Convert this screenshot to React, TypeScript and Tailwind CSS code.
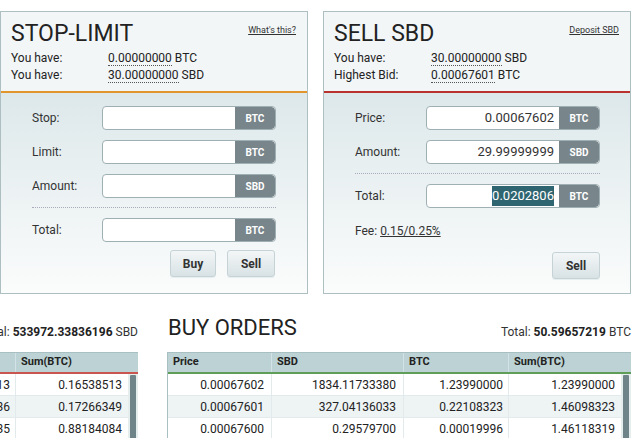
import React from "react";

const Badge = ({ children }: { children: React.ReactNode }) => (
  <div className="w-[40px] h-full bg-[#78858b] text-white text-[10px] font-bold flex items-center justify-center rounded-r-[4px]">
    {children}
  </div>
);

const Field = ({ unit, value, selected }: { unit: string; value?: string; selected?: boolean }) => (
  <div className="w-[174px] h-[24px] flex border border-[#9fb0b4] rounded-[4px] bg-white overflow-hidden">
    <div className="flex-1 flex items-center justify-end pr-[5px] text-[13px] text-[#333]">
      {selected ? <span className="bg-[#2f6570] text-white leading-[20px]">{value}</span> : value}
    </div>
    <Badge>{unit}</Badge>
  </div>
);

const Row = ({ label, unit, value, selected, lw }: { label: string; unit: string; value?: string; selected?: boolean; lw: string }) => (
  <div className="flex items-center">
    <div className={`${lw} text-[12px] text-[#333]`}>{label}</div>
    <Field unit={unit} value={value} selected={selected} />
  </div>
);

const Btn = ({ children, w }: { children: React.ReactNode; w: string }) => (
  <div className={`${w} h-[27px] border border-[#c6d3d6] rounded-[3px] bg-gradient-to-b from-[#f3f6f7] to-[#d8e2e5] flex items-center justify-center text-[12px] font-bold text-[#333] shadow-[0_1px_0_#e7eef0]`}>
    {children}
  </div>
);

const Dotted = ({ v }: { v: string }) => (
  <span className="border-b border-dotted border-[#555] leading-[13px] inline-block">{v}</span>
);

function StopLimit() {
  return (
    <div className="w-[308px] h-[283px] border border-[#aebfc2] flex flex-col bg-white">
      <div className="h-[81px] bg-[#f2f6f7] border-b-2 border-[#e2952a] px-[10px] pt-[8px]">
        <div className="flex justify-between items-center h-[28px]">
          <div className="text-[23px] text-[#222] leading-[28px]">STOP-LIMIT</div>
          <div className="text-[9px] text-[#333] underline mt-[-6px] mr-[1px]">What's this?</div>
        </div>
        <div className="mt-[2px] text-[12px] text-[#222] leading-[17px]">
          <div className="flex"><div className="w-[97px]">You have:</div><div><Dotted v="0.00000000" /> BTC</div></div>
          <div className="flex"><div className="w-[97px]">You have:</div><div><Dotted v="30.00000000" /> SBD</div></div>
        </div>
      </div>
      <div className="flex-1 bg-gradient-to-b from-[#dde8ea] to-[#fbfcfc] px-[31px] pt-[13px] flex flex-col">
        <div className="flex flex-col gap-[10px]">
          <Row label="Stop:" unit="BTC" lw="w-[70px]" />
          <Row label="Limit:" unit="BTC" lw="w-[70px]" />
          <Row label="Amount:" unit="SBD" lw="w-[70px]" />
        </div>
        <div className="mt-[9px] border-t border-dotted border-[#aab]" />
        <div className="mt-[10px]"><Row label="Total:" unit="BTC" lw="w-[70px]" /></div>
        <div className="mt-[8px] flex justify-end gap-[11px] pr-[1px]">
          <Btn w="w-[46px]">Buy</Btn>
          <Btn w="w-[48px]">Sell</Btn>
        </div>
      </div>
    </div>
  );
}

function SellSbd() {
  return (
    <div className="w-[308px] h-[283px] border border-[#aebfc2] flex flex-col bg-white">
      <div className="h-[81px] bg-[#f2f6f7] border-b-2 border-[#b9322e] px-[10px] pt-[8px]">
        <div className="flex justify-between items-center h-[28px]">
          <div className="text-[23px] text-[#222] leading-[28px]">SELL SBD</div>
          <div className="text-[9px] text-[#333] underline mt-[-6px] mr-[1px]">Deposit SBD</div>
        </div>
        <div className="mt-[2px] text-[12px] text-[#222] leading-[17px]">
          <div className="flex"><div className="w-[97px]">You have:</div><div><Dotted v="30.00000000" /> SBD</div></div>
          <div className="flex"><div className="w-[97px]">Highest Bid:</div><div><Dotted v="0.00067601" /> BTC</div></div>
        </div>
      </div>
      <div className="flex-1 bg-gradient-to-b from-[#dde8ea] to-[#fbfcfc] pl-[31px] pr-[30px] pt-[13px] flex flex-col">
        <div className="flex flex-col gap-[10px]">
          <Row label="Price:" unit="BTC" value="0.00067602" lw="w-[71px]" />
          <Row label="Amount:" unit="SBD" value="29.99999999" lw="w-[71px]" />
        </div>
        <div className="mt-[9px] border-t border-dotted border-[#aab]" />
        <div className="mt-[10px]"><Row label="Total:" unit="BTC" value="0.0202806" selected lw="w-[71px]" /></div>
        <div className="mt-[14px] text-[12px] text-[#333]">Fee: <span className="underline">0.15/0.25%</span></div>
        <div className="mt-[12px] flex justify-end">
          <Btn w="w-[48px]">Sell</Btn>
        </div>
      </div>
    </div>
  );
}

type R = [string, string, string, string];

function OrderTable({ title, total, unit, rows, line }: { title: string; total: string; unit: string; rows: R[]; line: string }) {
  return (
    <div className="w-[464px] shrink-0 flex flex-col">
      <div className="flex justify-between items-end h-[37px]">
        <div className="text-[22px] text-[#222] leading-[26px] mb-[1px] ml-[1px]">{title}</div>
        <div className="text-[12px] text-[#333] mb-[1px]">Total: <b className="text-[#222]">{total}</b> {unit}</div>
      </div>
      <div className="mt-[10px] border border-[#a9c0c3] border-r-0">
        <div className={`flex h-[21px] bg-[#bcd2d4] border-b-2 ${line} text-[11px] font-bold text-[#222] items-center`}>
          <div className="w-[104px] pl-[5px] border-r border-[#d3e2e4] h-full flex items-center">Price</div>
          <div className="w-[132px] pl-[5px] border-r border-[#d3e2e4] h-full flex items-center">SBD</div>
          <div className="w-[105px] pl-[5px] border-r border-[#d3e2e4] h-full flex items-center">BTC</div>
          <div className="flex-1 pl-[5px] h-full flex items-center">Sum(BTC)</div>
        </div>
        <div className="flex">
          <div className="flex-1">
            {rows.map((r, i) => (
              <div key={i} className={`flex h-[22px] items-center text-[12px] text-[#222] border-b border-[#e3eaeb] ${i % 2 ? "bg-[#eef3f4]" : "bg-white"}`}>
                <div className="w-[104px] text-right pr-[7px] border-r border-[#e3eaeb] h-full leading-[22px]">{r[0]}</div>
                <div className="w-[132px] text-right pr-[7px] border-r border-[#e3eaeb] h-full leading-[22px]">{r[1]}</div>
                <div className="w-[105px] text-right pr-[5px] border-r border-[#e3eaeb] h-full leading-[22px]">{r[2]}</div>
                <div className="flex-1 text-right pr-[6px] h-full leading-[22px]">{r[3]}</div>
              </div>
            ))}
          </div>
          <div className="w-[10px] bg-[#e6eded] flex justify-center pt-[1px]">
            <div className="w-[6px] h-[80px] bg-[#6e8488] rounded-[1px]" />
          </div>
        </div>
      </div>
    </div>
  );
}

export default function App() {
  return (
    <div className="w-[640px] h-[438px] overflow-hidden bg-white" style={{ fontFamily: "Roboto, 'Liberation Sans', sans-serif" }}>
      <div className="flex gap-[15px] pt-[11px]">
        <StopLimit />
        <SellSbd />
      </div>
      <div className="flex gap-[29px] mt-[11px] ml-[-326px]">
        <OrderTable
          title="SELL ORDERS"
          total="533972.33836196"
          unit="SBD"
          line="border-[#c9554f]"
          rows={[
            ["0.00067700", "244.29712371", "0.16538513", "0.16538513"],
            ["0.00067800", "10.73504424", "0.00727836", "0.17266349"],
            ["0.00067900", "1044.44381443", "0.70917735", "0.88184084"],
            ["0.00068000", "100.00000000", "0.06800000", "0.94984084"],
          ]}
        />
        <OrderTable
          title="BUY ORDERS"
          total="50.59657219"
          unit="BTC"
          line="border-[#5e9e58]"
          rows={[
            ["0.00067602", "1834.11733380", "1.23990000", "1.23990000"],
            ["0.00067601", "327.04136033", "0.22108323", "1.46098323"],
            ["0.00067600", "0.29579700", "0.00019996", "1.46118319"],
            ["0.00067500", "100.00000000", "0.06750000", "1.52868319"],
          ]}
        />
      </div>
    </div>
  );
}
